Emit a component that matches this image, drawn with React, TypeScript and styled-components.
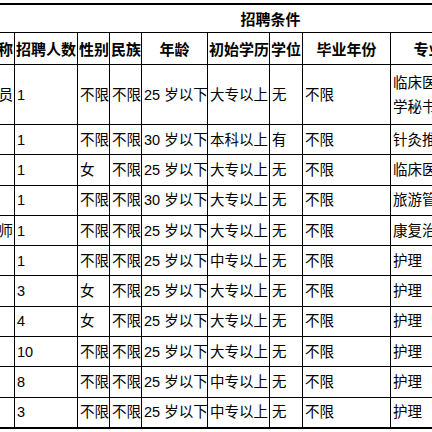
import React from "react";
import styled, { createGlobalStyle } from "styled-components";

const GlobalStyle = createGlobalStyle`
  html, body {
    margin: 0;
    padding: 0;
    background: #fff;
  }
`;

const Viewport = styled.div`
  width: 432px;
  height: 432px;
  overflow: hidden;
  background: #fff;
  padding-top: 3px;
  box-sizing: border-box;
`;

const Table = styled.table`
  margin-left: -86px;
  width: 612px;
  table-layout: fixed;
  border-collapse: collapse;
  border-top: 2px solid #000;
  border-bottom: 2px solid #000;
  font-family: "Liberation Sans", "Noto Sans CJK SC", sans-serif;
  color: #000;
`;

const TitleCell = styled.th`
  height: 27px;
  padding: 0;
  font-size: 15px;
  font-weight: 700;
  text-align: center;
  border-bottom: 1px solid #000;
  border-left: none;
  border-right: none;
`;

const HeadCell = styled.th<{ $align?: "left" | "center" | "right" }>`
  height: 31px;
  padding: 0 1px;
  font-size: 15px;
  font-weight: 700;
  white-space: nowrap;
  overflow: hidden;
  text-align: ${(p) => p.$align ?? "left"};
  border: 1px solid #000;
`;

const Cell = styled.td<{ $align?: "left" | "right"; $tall?: boolean }>`
  height: ${(p) => (p.$tall ? "59px" : "29.3px")};
  padding: 0 1px 0 2px;
  font-size: 14.5px;
  line-height: 24px;
  white-space: nowrap;
  overflow: hidden;
  text-align: ${(p) => p.$align ?? "left"};
  vertical-align: middle;
  border: 1px solid #000;
`;

const widths = [100, 63, 32, 32, 66, 62, 33, 88, 76, 60];

type Row = {
  post: string;
  count: string;
  sex: string;
  nation: string;
  age: string;
  edu: string;
  degree: string;
  year: string;
  major: string[];
};

const rows: Row[] = [
  { post: "办公室文员", count: "1", sex: "不限", nation: "不限", age: "25 岁以下", edu: "大专以上", degree: "无", year: "不限", major: ["临床医学、文", "学秘书"] },
  { post: "", count: "1", sex: "不限", nation: "不限", age: "30 岁以下", edu: "本科以上", degree: "有", year: "不限", major: ["针灸推拿"] },
  { post: "", count: "1", sex: "女", nation: "不限", age: "25 岁以下", edu: "大专以上", degree: "无", year: "不限", major: ["临床医学"] },
  { post: "", count: "1", sex: "不限", nation: "不限", age: "30 岁以下", edu: "大专以上", degree: "无", year: "不限", major: ["旅游管理"] },
  { post: "康复治疗师", count: "1", sex: "不限", nation: "不限", age: "25 岁以下", edu: "大专以上", degree: "无", year: "不限", major: ["康复治疗"] },
  { post: "", count: "1", sex: "不限", nation: "不限", age: "25 岁以下", edu: "中专以上", degree: "无", year: "不限", major: ["护理"] },
  { post: "", count: "3", sex: "女", nation: "不限", age: "25 岁以下", edu: "大专以上", degree: "无", year: "不限", major: ["护理"] },
  { post: "", count: "4", sex: "女", nation: "不限", age: "25 岁以下", edu: "大专以上", degree: "无", year: "不限", major: ["护理"] },
  { post: "", count: "10", sex: "不限", nation: "不限", age: "25 岁以下", edu: "大专以上", degree: "无", year: "不限", major: ["护理"] },
  { post: "", count: "8", sex: "不限", nation: "不限", age: "25 岁以下", edu: "中专以上", degree: "无", year: "不限", major: ["护理"] },
  { post: "", count: "3", sex: "不限", nation: "不限", age: "25 岁以下", edu: "中专以上", degree: "无", year: "不限", major: ["护理"] },
];

export default function App() {
  return (
    <>
      <GlobalStyle />
      <Viewport>
        <Table>
          <colgroup>
            {widths.map((w, i) => (
              <col key={i} style={{ width: w }} />
            ))}
          </colgroup>
          <thead>
            <tr>
              <TitleCell />
              <TitleCell colSpan={9}>招聘条件</TitleCell>
            </tr>
            <tr>
              <HeadCell $align="right">岗位名称</HeadCell>
              <HeadCell>招聘人数</HeadCell>
              <HeadCell>性别</HeadCell>
              <HeadCell>民族</HeadCell>
              <HeadCell $align="center">年龄</HeadCell>
              <HeadCell>初始学历</HeadCell>
              <HeadCell>学位</HeadCell>
              <HeadCell $align="center">毕业年份</HeadCell>
              <HeadCell $align="center">专业</HeadCell>
              <HeadCell $align="center">其他</HeadCell>
            </tr>
          </thead>
          <tbody>
            {rows.map((r, i) => (
              <tr key={i}>
                <Cell $align="right" $tall={i === 0}>{r.post}</Cell>
                <Cell>{r.count}</Cell>
                <Cell>{r.sex}</Cell>
                <Cell>{r.nation}</Cell>
                <Cell>{r.age}</Cell>
                <Cell>{r.edu}</Cell>
                <Cell>{r.degree}</Cell>
                <Cell>{r.year}</Cell>
                <Cell>
                  {r.major.map((line, j) => (
                    <div key={j}>{line}</div>
                  ))}
                </Cell>
                <Cell />
              </tr>
            ))}
          </tbody>
        </Table>
      </Viewport>
    </>
  );
}
